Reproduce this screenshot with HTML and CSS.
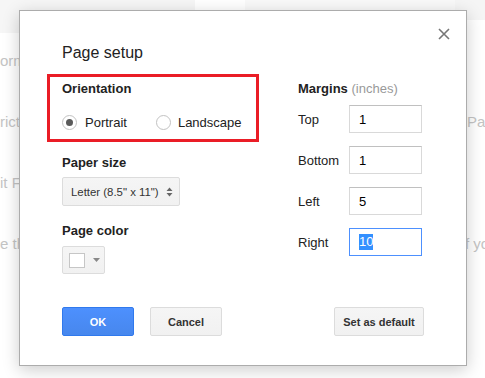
FILE: index.html
```html
<!DOCTYPE html>
<html lang="en">
<head>
    <meta charset="UTF-8">
    <meta name="viewport" content="width=device-width, initial-scale=1.0">
    <title>Page setup</title>
    <link rel="stylesheet" href="styles.css">
</head>
<body>
    <div class="backdrop">
        <div class="topbar">
            <span class="band band-a"></span>
            <span class="band band-gap"></span>
            <span class="band band-b"></span>
            <span class="band band-c"></span>
        </div>
        <div class="doc">
            <div class="doc-row"><span class="doc-l">orm</span><span class="doc-r"></span></div>
            <div class="doc-row"><span class="doc-l">rict</span><span class="doc-r">Pag</span></div>
            <div class="doc-row"><span class="doc-l">it F</span><span class="doc-r"></span></div>
            <div class="doc-row"><span class="doc-l">e th</span><span class="doc-r">f yo</span></div>
        </div>
    </div>

    <div class="dialog">
        <button class="close" title="Close">
            <svg width="12" height="12" viewBox="0 0 12 12">
                <path d="M1 1 L11 11 M11 1 L1 11" stroke="#777" stroke-width="1.6" fill="none"/>
            </svg>
        </button>
        <h2 class="title">Page setup</h2>

        <div class="columns">
            <div class="left">
                <div class="orientation">
                    <div class="label">Orientation</div>
                    <div class="radios">
                        <span class="radio checked"></span>
                        <span class="radio-text">Portrait</span>
                        <span class="radio second"></span>
                        <span class="radio-text">Landscape</span>
                    </div>
                </div>

                <div class="label paper-label">Paper size</div>
                <div class="select">
                    <span>Letter (8.5" x 11")</span>
                    <svg width="7" height="10" viewBox="0 0 7 10">
                        <path d="M0.5 4 L3.5 0.5 L6.5 4 Z M0.5 6 L3.5 9.5 L6.5 6 Z" fill="#666"/>
                    </svg>
                </div>

                <div class="label color-label">Page color</div>
                <div class="color-btn">
                    <span class="swatch"></span>
                    <svg width="7" height="4" viewBox="0 0 7 4">
                        <path d="M0 0 L7 0 L3.5 4 Z" fill="#888"/>
                    </svg>
                </div>
            </div>

            <div class="right">
                <div class="label">Margins <span class="muted">(inches)</span></div>
                <div class="margin-row first">
                    <span class="margin-label">Top</span>
                    <div class="field">1</div>
                </div>
                <div class="margin-row">
                    <span class="margin-label">Bottom</span>
                    <div class="field">1</div>
                </div>
                <div class="margin-row">
                    <span class="margin-label">Left</span>
                    <div class="field">5</div>
                </div>
                <div class="margin-row">
                    <span class="margin-label">Right</span>
                    <div class="field focused"><span class="selected">10</span></div>
                </div>
            </div>
        </div>

        <div class="actions">
            <button class="btn btn-primary">OK</button>
            <button class="btn">Cancel</button>
            <button class="btn btn-default">Set as default</button>
        </div>
    </div>
</body>
</html>
```

FILE: styles.css
```css
* {
    box-sizing: border-box;
}

body {
    margin: 0;
    width: 485px;
    height: 378px;
    overflow: hidden;
    position: relative;
    background: #fff;
    font-family: "Liberation Sans", Arial, sans-serif;
    color: #222;
}

/* page behind the dialog */
.topbar {
    display: flex;
    align-items: flex-start;
    height: 33px;
}

.band-a {
    width: 195px;
    height: 33px;
    background: #f6f6f6;
}

.band-gap {
    width: 50px;
}

.band-b {
    width: 210px;
    height: 20px;
    background: #f9f9f9;
}

.band-c {
    flex: 1;
    height: 20px;
    background: #f5f5f5;
}

.doc {
    display: grid;
    row-gap: 41px;
    padding-top: 18px;
    font-size: 15px;
    color: #c4c4c4;
}

.doc-row {
    display: grid;
    grid-template-columns: 467px 1fr;
    height: 20px;
    line-height: 20px;
}

.doc-l,
.doc-r {
    white-space: nowrap;
    overflow: hidden;
}

.doc-row:nth-child(4) .doc-r {
    margin-left: -2px;
}

/* dialog */
.dialog {
    position: absolute;
    left: 19px;
    top: 10px;
    width: 448px;
    height: 356px;
    background: #fff;
    border: 1px solid #acacac;
    box-shadow: 0 4px 16px rgba(0, 0, 0, 0.2);
    padding: 32px 42px 0 42px;
}

.close {
    position: absolute;
    top: 17px;
    right: 16px;
    width: 12px;
    height: 12px;
    padding: 0;
    border: none;
    background: none;
    display: flex;
}

.title {
    margin: 0;
    font-size: 16px;
    font-weight: normal;
    line-height: 20px;
    color: #222;
}

.columns {
    display: flex;
    margin-top: 11px;
}

.left {
    width: 236px;
}

.label {
    font-size: 13px;
    font-weight: bold;
    line-height: 16px;
    color: #222;
}

.muted {
    font-weight: normal;
    color: #999;
}

.orientation {
    width: 212px;
    margin-left: -15px;
    border: 3px solid #ea1d26;
    padding: 4px 0 9px 12px;
}

.radios {
    display: flex;
    align-items: center;
    margin-top: 18px;
    font-size: 13px;
    line-height: 15px;
}

.radio {
    width: 15px;
    height: 15px;
    border: 1px solid #c2c2c2;
    border-radius: 50%;
    background: #fff;
    display: flex;
    align-items: center;
    justify-content: center;
}

.radio.checked::after {
    content: "";
    width: 7px;
    height: 7px;
    border-radius: 50%;
    background: #5a5a5a;
}

.radio.second {
    margin-left: 29px;
}

.radio-text {
    margin-left: 8px;
    color: #222;
}

.radio.second + .radio-text {
    margin-left: 7px;
}

.paper-label {
    margin-top: 13px;
}

.select {
    display: flex;
    align-items: center;
    justify-content: space-between;
    width: 118px;
    height: 29px;
    margin-top: 6px;
    padding: 0 6px 0 8px;
    border: 1px solid #dcdcdc;
    border-radius: 2px;
    background: linear-gradient(#f5f5f5, #f1f1f1);
    font-size: 11.4px;
    color: #333;
}

.color-label {
    margin-top: 17px;
}

.color-btn {
    display: flex;
    align-items: center;
    width: 43px;
    height: 28px;
    margin-top: 7px;
    padding-left: 6px;
    border: 1px solid #dcdcdc;
    border-radius: 2px;
    background: linear-gradient(#f5f5f5, #f1f1f1);
}

.swatch {
    width: 16px;
    height: 15px;
    border: 1px solid #c6c6c6;
    background: #fff;
    margin-right: 8px;
}

.right {
    flex: 1;
    padding-top: 7px;
}

.margin-row {
    display: flex;
    align-items: center;
    height: 28px;
    margin-top: 13px;
    font-size: 13px;
}

.margin-row.first {
    margin-top: 8px;
}

.margin-label {
    width: 51px;
    color: #222;
}

.field {
    display: flex;
    align-items: center;
    width: 73px;
    height: 28px;
    padding-left: 9px;
    border: 1px solid #d9d9d9;
    border-top-color: #c0c0c0;
    font-size: 13px;
    color: #000;
}

.field.focused {
    border-color: #4d90fe;
}

.selected {
    background: #3390ff;
    color: #fff;
    line-height: 16px;
}

.actions {
    display: flex;
    margin-top: 33px;
}

.btn {
    width: 72px;
    height: 29px;
    border: 1px solid #dcdcdc;
    border-radius: 2px;
    background: linear-gradient(#f5f5f5, #f1f1f1);
    font-family: "Liberation Sans", Arial, sans-serif;
    font-size: 11px;
    font-weight: bold;
    color: #333;
    padding: 0;
}

.btn + .btn {
    margin-left: 16px;
}

.btn-primary {
    background: linear-gradient(#4d90fe, #4787ed);
    border-color: #3079ed;
    color: #fff;
}

.btn-default {
    width: 90px;
    margin-left: auto !important;
}
```
